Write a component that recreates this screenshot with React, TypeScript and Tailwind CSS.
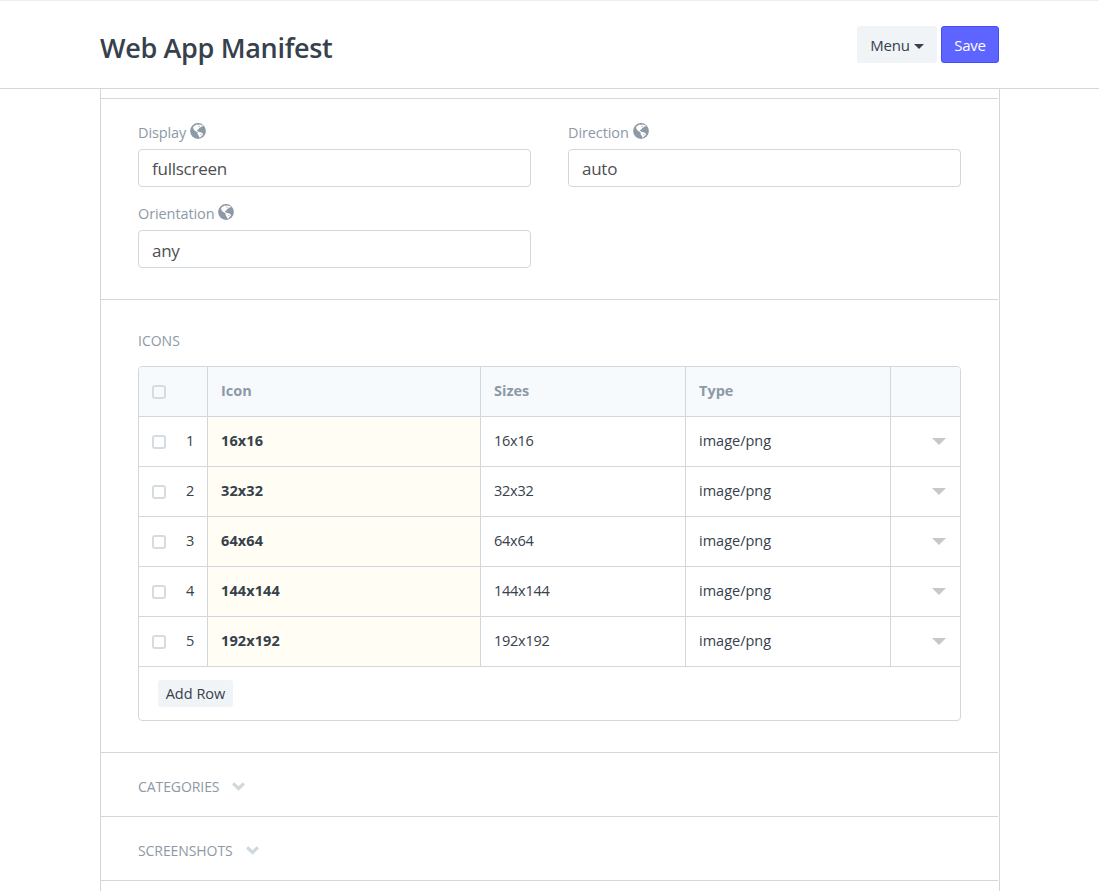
import React from "react";

function Globe() {
  return (
    <svg viewBox="0 0 16 16" className="ml-1 h-4 w-4 shrink-0">
      <circle cx="8" cy="8" r="7.9" fill="#8d99a6" />
      <g fill="#fff">
        <path d="M4.1 3.1 6.8 1.6l1.3.5 1.4-.7 2.9.9.9 1.3-1.7-.3-.8 1-1.3.5-1.2 1.7-1.3.5.2 1 1.2.6.2 1.1-1.1-.2-1.3-1.1-1.7-.9-1.2-1.8-.2-1.4z" />
        <path d="m7.9 9.3 1.7-.4 1.6.7 1.8 1.1-.2 1.4-1.3.9-1 1.3-1.1.5-.3-1.6-1-1.2-.6-1.2z" />
      </g>
      <path d="M8.2 3.2 9.5 2.6l.4.9-1.1.7zM10.4 10.9l1.3.1-.4 1-1.1.2z" fill="#8d99a6" opacity=".7" />
    </svg>
  );
}

function Field({ label, value, valueClass }: { label: string; value: string; valueClass: string }) {
  return (
    <div>
      <div className="flex h-[26px] items-start text-[14.5px] leading-5 tracking-[-0.1px] text-[#8d99a6]">
        <span>{label}</span>
        <Globe />
      </div>
      <div className={`flex h-[38px] items-center rounded border border-[#d1d8dd] px-[13px] text-[17px] tracking-[-0.25px] text-[#4c4f53] ${valueClass}`}>
        {value}
      </div>
    </div>
  );
}

function Check() {
  return <span className="mt-[2px] block h-[14px] w-[14px] rounded-[3px] border-2 border-[#d5dce1]" />;
}

const COLS = "grid grid-cols-[69px_273px_205px_205px_69px]";

const SIZES = ["16x16", "32x32", "64x64", "144x144", "192x192"];

function Section({ title }: { title: string }) {
  return (
    <div className="mr-px flex h-16 items-center border-t border-[#d1d8dd] pl-[37px] pt-[3px] text-[14px] tracking-[-0.08px] text-[#8d99a6]">
      <span>{title}</span>
      <svg viewBox="0 0 13 9" className="ml-[13px] h-[9px] w-[13px]">
        <path d="M0 2.4 2.2.2 6.5 4.3 10.8.2 13 2.4 6.5 8.8z" fill="#d1d8dd" />
      </svg>
    </div>
  );
}

export default function App() {
  return (
    <div className="h-[891px] overflow-hidden bg-white font-['Open_Sans','Noto_Sans',sans-serif] text-[#36414c]">
      <header className="flex h-[89px] items-start justify-between border-b border-t border-b-[#d1d8dd] border-t-[#ebeff2] px-[100px] pt-[25px]">
        <h1 className="pt-[2px] text-[27px] font-semibold leading-10 tracking-[-0.33px]">Web App Manifest</h1>
        <div className="flex gap-1 text-[15px] tracking-[-0.2px]">
          <button className="flex h-[37px] w-20 items-center justify-center rounded-[3px] bg-[#f0f4f7] pt-px">
            Menu
            <svg viewBox="0 0 10 5" className="ml-1 mt-[3px] h-[5px] w-[10px]">
              <path d="M0 0h10L5 5z" fill="#36414c" />
            </svg>
          </button>
          <button className="h-[37px] w-[58px] rounded-[3px] border border-[#444bff] bg-[#5e64ff] pt-px text-white">Save</button>
        </div>
      </header>

      <main className="ml-[100px] w-[900px] border-x border-[#d1d8dd] pt-[9px]">
        <section className="mr-px h-[201px] border-t border-[#d1d8dd] pl-[37px] pr-[37px] pt-6">
          <div className="grid grid-cols-[393px_393px] gap-x-[37px] gap-y-[17px]">
            <Field label="Display" value="fullscreen" valueClass="pt-px" />
            <Field label="Direction" value="auto" valueClass="pt-px" />
            <Field label="Orientation" value="any" valueClass="pt-[3px]" />
          </div>
        </section>

        <section className="mr-px h-[453px] border-t border-[#d1d8dd] pl-[37px] pt-[31px]">
          <h2 className="h-[35px] text-[14px] leading-5 text-[#8d99a6]">ICONS</h2>
          <div className="w-[823px] overflow-hidden rounded border border-[#d1d8dd] text-[14.5px]">
            <div className={`${COLS} h-[49px] bg-[#f7fafc] font-bold text-[#8d99a6]`}>
              <div className="flex items-center border-r border-[#d1d8dd] pb-[2px] pl-[13px]"><Check /></div>
              <div className="flex items-center border-r border-[#d1d8dd] pb-[2px] pl-[13px]">Icon</div>
              <div className="flex items-center border-r border-[#d1d8dd] pb-[2px] pl-[13px]">Sizes</div>
              <div className="flex items-center border-r border-[#d1d8dd] pb-[2px] pl-[13px]">Type</div>
              <div />
            </div>
            {SIZES.map((s, i) => (
              <div key={s} className={`${COLS} h-[50px] border-t border-[#d1d8dd]`}>
                <div className="flex items-center border-r border-[#d1d8dd] pb-[2px] pl-[13px]">
                  <Check />
                  <span className="ml-5">{i + 1}</span>
                </div>
                <div className="flex items-center border-r border-[#d1d8dd] bg-[#fffdf4] pb-[2px] pl-[13px] font-bold tracking-[0.1px]">{s}</div>
                <div className="flex items-center border-r border-[#d1d8dd] pb-[2px] pl-[13px] tracking-[-0.25px]">{s}</div>
                <div className="flex items-center border-r border-[#d1d8dd] pb-[2px] pl-[13px]">image/png</div>
                <div className="flex items-center pl-[41px]">
                  <svg viewBox="0 0 14 7" className="h-[7px] w-[14px]">
                    <path d="M0 0h14L7 7z" fill="#c8c8c8" />
                  </svg>
                </div>
              </div>
            ))}
            <div className="h-[54px] border-t border-[#d1d8dd] pl-[19px] pt-[13px]">
              <button className="h-[27px] w-[75px] rounded-[3px] bg-[#f0f4f7] text-[14.5px]">Add Row</button>
            </div>
          </div>
        </section>

        <Section title="CATEGORIES" />
        <Section title="SCREENSHOTS" />
        <div className="mr-px h-[11px] border-t border-[#d1d8dd]" />
      </main>
    </div>
  );
}
